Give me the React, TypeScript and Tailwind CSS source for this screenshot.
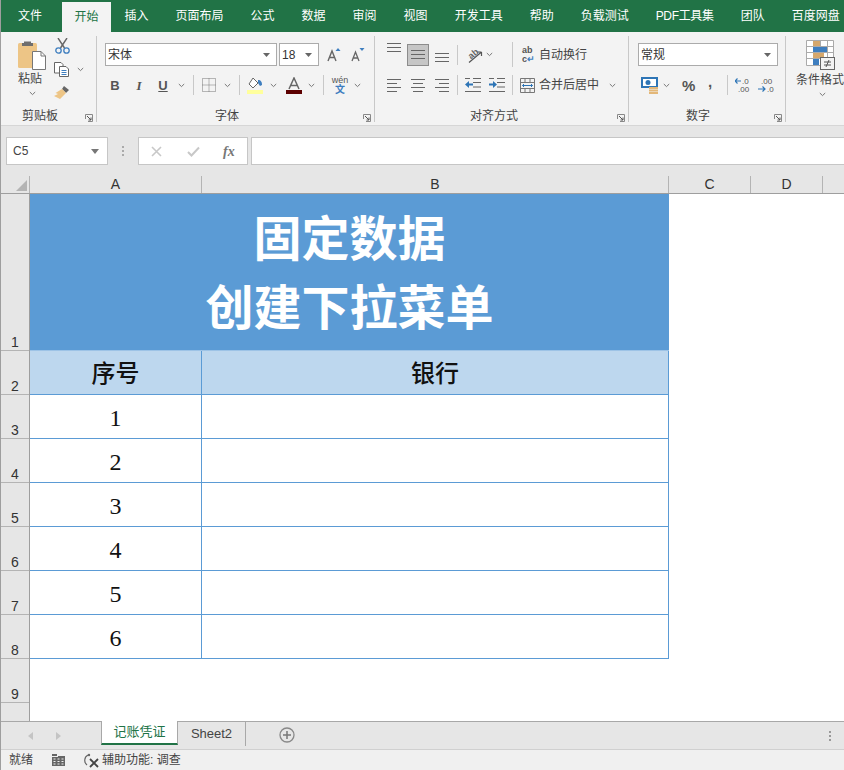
const cjk = { fontFamily: '"Liberation Sans","Noto Sans CJK SC",sans-serif' };
const latin = { fontFamily: '"Liberation Sans",sans-serif' };

const tabs = ['插入', '页面布局', '公式', '数据', '审阅', '视图', '开发工具', '帮助', '负载测试', 'PDF工具集', '团队', '百度网盘'];

function Chevron({ className = '' }: { className?: string }) {
  return (
    <svg width="7" height="5" viewBox="0 0 7 5" className={`shrink-0 ${className}`}>
      <path d="M.8 1 3.5 3.6 6.2 1" fill="none" stroke="#777" strokeWidth="1" />
    </svg>
  );
}

function Launcher() {
  return (
    <svg width="8" height="8" viewBox="0 0 8 8" className="shrink-0">
      <path d="M.5 5V.5H7.5V7.5H3" fill="none" stroke="#888" />
      <path d="M2 2 6 6M6 3.500V6H3.500" fill="none" stroke="#555" />
    </svg>
  );
}

function Lines({ kind, y = 0 }: { kind: 'l' | 'c' | 'r' | 'f'; y?: number }) {
  const d = {
    l: 'M0 1.5H14M0 5.5H10M0 9.5H14M0 13.5H10',
    c: 'M0 1.5H14M2 5.5H12M0 9.5H14M2 13.5H12',
    r: 'M0 1.5H14M4 5.5H14M0 9.5H14M4 13.5H14',
    f: 'M0 1.5H14M0 5.5H14M0 9.5H14',
  }[kind];
  return (
    <svg width="14" height="15" viewBox="0 0 14 15" style={{ marginTop: y }}>
      <path d={d} stroke="#666" fill="none" />
    </svg>
  );
}

function Combo({ label, className }: { label: string; className: string }) {
  return (
    <div className={`h-[23px] bg-white border border-[#ababab] flex items-center justify-between pl-[2px] pr-[6px] text-[12px] text-[#333] ${className}`}>
      <span>{label}</span>
      <svg width="7" height="4" viewBox="0 0 7 4"><path d="M0 0H7L3.500 4Z" fill="#666" /></svg>
    </div>
  );
}

function GroupLabel({ label, className }: { label: string; className: string }) {
  return (
    <div className={`absolute bottom-[-2px] h-[16px] flex items-center ${className}`}>
      <span className="text-[12px] leading-[16px] text-[#444]">{label}</span>
    </div>
  );
}

function Ribbon() {
  return (
    <div className="h-[94px] bg-[#f3f3f3] flex border-b border-[#d6d6d6] text-[#444] overflow-hidden">
      {/* 剪贴板 */}
      <div className="relative w-[96px] shrink-0 border-r border-[#c8c8c8] my-[4px] h-[86px] flex pl-[17px] pt-[4px]">
        <div className="w-[36px] flex flex-col">
          <svg width="28" height="30" viewBox="0 0 28 30">
            <rect x="0" y="3" width="19" height="25" rx="1.500" fill="#edc586" />
            <path d="M6 3V1.500H13V3H15V6H4V3Z" fill="#6e6e6e" />
            <path d="M14.500 11.500H23L27.500 16V29.500H14.500Z" fill="#fff" stroke="#777" />
            <path d="M23 11.500V16H27.500" fill="none" stroke="#777" />
          </svg>
          <span className="text-[12px] leading-[16px] mt-[1px] w-[24px] whitespace-nowrap">粘贴</span>
          <Chevron className="ml-[11px] mt-[4px]" />
        </div>
        <div className="flex flex-col -mt-[2px]">
          <svg width="15" height="16" viewBox="0 0 15 16" className="ml-[1px]">
            <path d="M3 0 9.500 10M12 0 5.500 10" stroke="#666" strokeWidth="1.400" fill="none" />
            <circle cx="3.500" cy="12.500" r="2.700" fill="none" stroke="#3e7ebf" strokeWidth="1.300" />
            <circle cx="11.500" cy="12.500" r="2.700" fill="none" stroke="#3e7ebf" strokeWidth="1.300" />
          </svg>
          <div className="flex items-center mt-[8px]">
            <svg width="15" height="15" viewBox="0 0 15 15">
              <path d="M.5.500H7L9 2.500V11H.5Z" fill="#fff" stroke="#666" />
              <path d="M5.500 4.500H12L14.500 7V14.500H5.500Z" fill="#fff" stroke="#666" />
              <path d="M7.500 8.500H12.500M7.500 10.500H12.500M7.500 12.500H12.500" stroke="#3e7ebf" />
            </svg>
            <Chevron className="ml-[8px]" />
          </div>
          <svg width="16" height="15" viewBox="0 0 16 15" className="mt-[8px]">
            <path d="M10 1 15 5 12 8 8 4Z" fill="#666" />
            <path d="M8 4 12 8 6 14 0 11 4 9 1.500 8 5.500 5.500Z" fill="#edc586" />
          </svg>
        </div>
        <GroupLabel label="剪贴板" className="left-[21px]" />
        <div className="absolute right-[3px] bottom-0"><Launcher /></div>
      </div>

      {/* 字体 */}
      <div className="relative w-[278px] shrink-0 border-r border-[#c8c8c8] my-[4px] h-[86px] pl-[8px] pt-[7px]">
        <div className="flex items-center h-[23px]">
          <Combo label="宋体" className="w-[172px]" />
          <Combo label="18" className="w-[40px] ml-[2px]" />
          <svg width="14" height="14" viewBox="0 0 14 14" className="ml-[8px]">
            <path d="M1 13 5 3 9 13M2.500 9.500H7.500" fill="none" stroke="#666" strokeWidth="1.400" />
            <path d="M8.500 3 11 0 13.500 3Z" fill="#3e7ebf" />
          </svg>
          <svg width="14" height="14" viewBox="0 0 14 14" className="ml-[10px]">
            <path d="M1 13 4.500 4 8 13M2.300 10H6.700" fill="none" stroke="#666" strokeWidth="1.300" />
            <path d="M8.500 0H13.500L11 3Z" fill="#3e7ebf" />
          </svg>
        </div>
        <div className="flex items-center h-[24px] mt-[7px] text-[#555]">
          <span className="w-[10px] ml-[5px] text-center font-bold text-[13px] leading-none" style={latin}>B</span>
          <span className="w-[10px] ml-[14px] text-center italic font-bold text-[13px] leading-none" style={{ fontFamily: '"Liberation Serif",serif' }}>I</span>
          <span className="w-[10px] ml-[14px] text-center underline font-bold text-[13px] leading-none" style={latin}>U</span>
          <Chevron className="ml-[10px]" />
          <div className="w-px h-[20px] bg-[#c8c8c8] ml-[8px]" />
          <svg width="14" height="14" viewBox="0 0 14 14" className="ml-[8px]">
            <path d="M.5.500H13.500V13.500H.5ZM7 .5V13.500M.5 7H13.500" fill="none" stroke="#777" strokeDasharray="1 1" />
          </svg>
          <Chevron className="ml-[8px]" />
          <div className="w-px h-[20px] bg-[#c8c8c8] ml-[8px]" />
          <svg width="17" height="17" viewBox="0 0 17 17" className="ml-[7px]">
            <path d="M6 1 11 6 6 11 2 7Z" fill="#fff" stroke="#666" />
            <path d="M11 3C14 3 15 5 15 8L13 9 11 6Z" fill="#3e7ebf" />
            <rect x="0" y="13" width="16" height="4" fill="#ffff9c" />
          </svg>
          <Chevron className="ml-[6px]" />
          <svg width="16" height="17" viewBox="0 0 16 17" className="ml-[9px]">
            <path d="M3 12 8 1 13 12M4.700 8.500H11.300" fill="none" stroke="#666" strokeWidth="1.500" />
            <rect x="0" y="13" width="16" height="4" fill="#5c0000" />
          </svg>
          <Chevron className="ml-[6px]" />
          <div className="w-px h-[20px] bg-[#c8c8c8] ml-[8px]" />
          <div className="ml-[8px] w-[16px] flex flex-col items-center leading-none">
            <span className="text-[9px] leading-[9px] text-[#555]" style={latin}>wén</span>
            <span className="text-[10px] leading-[10px] text-[#3e7ebf] font-bold">文</span>
          </div>
          <Chevron className="ml-[6px]" />
        </div>
        <GroupLabel label="字体" className="left-[118px]" />
        <div className="absolute right-[3px] bottom-0"><Launcher /></div>
      </div>

      {/* 对齐方式 */}
      <div className="relative w-[254px] shrink-0 border-r border-[#c8c8c8] my-[4px] h-[86px] pl-[12px] pt-[7px]">
        <div className="flex items-center h-[23px]">
          <div className="w-[14px] h-[23px]"><Lines kind="f" y={-1} /></div>
          <div className="ml-[6px] w-[22px] h-[22px] bg-[#c6c6c6] border border-[#8c8c8c] flex items-center justify-center">
            <svg width="14" height="11" viewBox="0 0 14 11"><path d="M0 1.500H14M0 5.500H14M0 9.500H14" stroke="#666" /></svg>
          </div>
          <div className="ml-[6px] w-[14px] h-[23px] pt-[9px]"><Lines kind="f" /></div>
          <div className="w-px h-[20px] bg-[#c8c8c8] ml-[8px]" />
          <svg width="18" height="18" viewBox="0 0 18 18" className="ml-[7px]">
            <text x="3" y="11" fontSize="9" fontWeight="700" fill="#666" fontFamily="Liberation Sans" transform="rotate(-40 8 8)">ab</text>
            <path d="M4 16.500 16.500 6M16.500 6H12.500M16.500 6V10" fill="none" stroke="#555" strokeWidth="1.200" />
          </svg>
          <Chevron className="ml-[3px]" />
          <div className="w-px h-[25px] bg-[#c8c8c8] ml-[19px]" />
          <div className="ml-[9px] w-[14px] flex flex-col text-[#555] text-[9px] leading-[9px] font-bold" style={latin}>
            <span>ab</span>
            <span>c<span className="text-[#3e7ebf]">↵</span></span>
          </div>
          <span className="ml-[3px] text-[12px] whitespace-nowrap">自动换行</span>
        </div>
        <div className="flex items-center h-[24px] mt-[7px]">
          <Lines kind="l" />
          <div className="ml-[10px]"><Lines kind="c" /></div>
          <div className="ml-[10px]"><Lines kind="r" /></div>
          <div className="w-px h-[20px] bg-[#c8c8c8] ml-[8px]" />
          <svg width="16" height="14" viewBox="0 0 16 14" className="ml-[7px]">
            <path d="M8 .5H16M8 4.500H16M8 9H16M0 13.500H16M0 .5H5" stroke="#666" fill="none" />
            <path d="M0 6.500 4 3V10ZM4 5.500H8V7.500H4Z" fill="#2e75b6" />
          </svg>
          <svg width="16" height="14" viewBox="0 0 16 14" className="ml-[8px]">
            <path d="M8 .5H16M8 4.500H16M8 9H16M0 13.500H16M0 .5H5" stroke="#666" fill="none" />
            <path d="M8 6.500 4 3V10ZM0 5.500H4V7.500H0Z" fill="#2e75b6" />
          </svg>
          <div className="w-px h-[20px] bg-[#c8c8c8] ml-[7px]" />
          <svg width="15" height="15" viewBox="0 0 15 15" className="ml-[7px]">
            <path d="M.5.500H14.500V14.500H.5ZM.5 4.500H14.500M.5 10.500H14.500M5 .5V4.500M10 .5V4.500M5 10.500V14.500M10 10.500V14.500" fill="none" stroke="#777" />
            <path d="M2.500 7.500H12.500M4 6 2.500 7.500 4 9M11 6 12.500 7.500 11 9" fill="none" stroke="#2e75b6" />
          </svg>
          <span className="ml-[4px] text-[12px] whitespace-nowrap">合并后居中</span>
          <Chevron className="ml-[10px]" />
        </div>
        <GroupLabel label="对齐方式" className="left-[95px]" />
        <div className="absolute right-[3px] bottom-0"><Launcher /></div>
      </div>

      {/* 数字 */}
      <div className="relative w-[157px] shrink-0 border-r border-[#c8c8c8] my-[4px] h-[86px] pl-[9px] pt-[7px]">
        <Combo label="常规" className="w-[140px]" />
        <div className="flex items-center h-[24px] mt-[7px]">
          <svg width="18" height="17" viewBox="0 0 18 17" className="ml-[3px] shrink-0">
            <rect x="1" y="1" width="15" height="9" fill="#fff" stroke="#2e75b6" strokeWidth="2" />
            <circle cx="7" cy="5.500" r="2.500" fill="#2e75b6" />
            <path d="M8 11H17M8 13.500H17M8 16H17" stroke="#e3b778" strokeWidth="1.800" />
          </svg>
          <Chevron className="ml-[4px]" />
          <span className="ml-[12px] w-[14px] text-[15px] leading-none font-bold text-[#555]" style={latin}>%</span>
          <span className="ml-[12px] w-[6px] -mt-[7px] text-[15px] leading-none font-bold text-[#555]" style={latin}>,</span>
          <div className="w-px h-[20px] bg-[#c8c8c8] ml-[13px]" />
          <svg width="16" height="16" viewBox="0 0 16 16" className="ml-[7px] shrink-0">
            <text x="7" y="7" fontSize="8" fill="#555" fontFamily="Liberation Sans">.0</text>
            <text x="3" y="15" fontSize="8" fill="#555" fontFamily="Liberation Sans">.00</text>
            <path d="M0 4H6M2.500 1.500 0 4 2.500 6.500" fill="none" stroke="#2e75b6" strokeWidth="1.200" />
          </svg>
          <svg width="16" height="16" viewBox="0 0 16 16" className="ml-[7px] shrink-0">
            <text x="3" y="7" fontSize="8" fill="#555" fontFamily="Liberation Sans">.00</text>
            <text x="9" y="15" fontSize="8" fill="#555" fontFamily="Liberation Sans">.0</text>
            <path d="M0 12H7M4.500 9.500 7 12 4.500 14.500" fill="none" stroke="#2e75b6" strokeWidth="1.200" />
          </svg>
        </div>
        <GroupLabel label="数字" className="left-[57px]" />
        <div className="absolute right-[3px] bottom-0"><Launcher /></div>
      </div>

      {/* 样式 */}
      <div className="flex-1 pl-[10px] pt-[8px] flex flex-col whitespace-nowrap">
        <svg width="29" height="30" viewBox="0 0 29 30" className="ml-[10px] shrink-0">
          <path d="M.5.500H27.500V25.500H.5ZM.5 6.500H27.500M.5 12.500H27.500M.5 18.500H27.500M7.500.5V25.500M14.500.5V25.500M21.500.5V25.500" fill="#fff" stroke="#aaa" />
          <rect x="7" y="1" width="7" height="5" fill="#d5a76c" />
          <rect x="7" y="7" width="14" height="5" fill="#3e7ebf" />
          <rect x="7" y="13" width="11" height="5" fill="#d5a76c" />
          <rect x="7" y="19" width="6" height="6" fill="#3e7ebf" />
          <rect x="14.500" y="17.500" width="14" height="12" fill="#f3f3f3" stroke="#666" />
          <path d="M18 22H25M18 25H25M23 20 20 27" stroke="#555" fill="none" />
        </svg>
        <span className="text-[12px] leading-[16px] mt-[2px]">条件格式</span>
        <Chevron className="ml-[23px] mt-[4px]" />
      </div>
    </div>
  );
}

function FormulaBar() {
  return (
    <div className="h-[50px] pt-[11px] pl-[5px] flex items-start">
      <div className="w-[102px] h-[28px] bg-white border border-[#c6c6c6] flex items-center justify-between pl-[6px] pr-[8px] text-[12px] text-[#444]">
        <span style={latin}>C5</span>
        <svg width="8" height="5" viewBox="0 0 8 5"><path d="M0 0H8L4 5Z" fill="#777" /></svg>
      </div>
      <div className="w-[30px] h-[28px] flex flex-col items-center justify-center gap-[2px]">
        <div className="w-[2px] h-[2px] bg-[#aaa]" />
        <div className="w-[2px] h-[2px] bg-[#aaa]" />
        <div className="w-[2px] h-[2px] bg-[#aaa]" />
      </div>
      <div className="w-[110px] h-[28px] bg-white border border-[#c6c6c6] flex items-center pl-[12px]">
        <svg width="11" height="11" viewBox="0 0 11 11"><path d="M1 1 10 10M10 1 1 10" stroke="#c8c8c8" strokeWidth="1.600" /></svg>
        <svg width="13" height="11" viewBox="0 0 13 11" className="ml-[25px]"><path d="M1 6 4.500 9.500 12 1.500" fill="none" stroke="#c8c8c8" strokeWidth="2" /></svg>
        <span className="ml-[23px] italic font-bold text-[14px] text-[#777]" style={{ fontFamily: '"Liberation Serif",serif' }}>fx</span>
      </div>
      <div className="ml-[3px] flex-1 h-[28px] bg-white border border-[#c6c6c6] border-r-0" />
    </div>
  );
}

const head = 'h-full bg-[#e6e6e6] flex items-center justify-center border-l border-[#b4b4b4] text-[14px] text-[#333]';

function ColumnHeaders() {
  return (
    <div className="h-[18px] flex border-b border-[#9e9e9e]" style={latin}>
      <div className="w-[28px] h-full flex items-end justify-end pr-[2px] pb-[2px]">
        <svg width="11" height="11" viewBox="0 0 12 12"><path d="M12 0V12H0Z" fill="#b4b4b4" /></svg>
      </div>
      <div className={`w-[172px] ${head}`}>A</div>
      <div className={`w-[467px] ${head}`}>B</div>
      <div className={`w-[82px] ${head}`}>C</div>
      <div className={`w-[72px] ${head}`}>D</div>
      <div className="flex-1 border-l border-[#b4b4b4]" />
    </div>
  );
}

const rowHeads = [
  { n: '1', h: 'h-[157px]' },
  { n: '2', h: 'h-[44px]' },
  { n: '3', h: 'h-[44px]' },
  { n: '4', h: 'h-[44px]' },
  { n: '5', h: 'h-[44px]' },
  { n: '6', h: 'h-[44px]' },
  { n: '7', h: 'h-[44px]' },
  { n: '8', h: 'h-[44px]' },
  { n: '9', h: 'h-[44px]' },
];

function Sheet() {
  return (
    <div className="h-[527px] flex bg-white overflow-hidden">
      <div className="w-[29px] shrink-0 bg-[#e6e6e6] border-r border-[#9e9e9e] flex flex-col" style={latin}>
        {rowHeads.map((r) => (
          <div key={r.n} className={`${r.h} shrink-0 border-b border-[#b4b4b4] flex items-end justify-center text-[14px] leading-[16px] text-[#333]`}>
            {r.n}
          </div>
        ))}
      </div>
      <div className="w-[639px] shrink-0 self-start">
        <div className="h-[157px] bg-[#5b9bd5] flex flex-col items-center justify-center pb-[5px] text-white font-bold text-[48px] leading-[69px] border-b border-[#9dc3e6]" style={{ fontFamily: '"Noto Sans CJK SC",sans-serif' }}>
          <span>固定数据</span>
          <span>创建下拉菜单</span>
        </div>
        <div className="grid grid-cols-[172px_467px] text-[24px] text-[#111]" style={{ fontFamily: '"Liberation Serif","Noto Sans CJK SC",serif' }}>
          <div className="h-[44px] pt-[3px] font-medium bg-[#bdd7ee] border-r border-b border-[#5b9bd5] flex items-center justify-center">序号</div>
          <div className="h-[44px] pt-[3px] font-medium bg-[#bdd7ee] border-r border-b border-[#5b9bd5] flex items-center justify-center">银行</div>
          {['1', '2', '3', '4', '5', '6'].flatMap((n) => [
            <div key={n} className="h-[44px] pt-[3px] border-r border-b border-[#5b9bd5] flex items-center justify-center">{n}</div>,
            <div key={n + 'b'} className="h-[44px] border-r border-b border-[#5b9bd5]" />,
          ])}
        </div>
      </div>
    </div>
  );
}

function SheetTabs() {
  return (
    <div className="h-[28px] bg-[#e6e6e6] border-t border-[#a8a8a8] flex text-[13px]">
      <div className="w-[100px] shrink-0 flex items-center pl-[27px]">
        <svg width="5" height="8" viewBox="0 0 5 8"><path d="M5 0V8L0 4Z" fill="#c4c4c4" /></svg>
        <svg width="5" height="8" viewBox="0 0 5 8" className="ml-[23px]"><path d="M0 0V8L5 4Z" fill="#c4c4c4" /></svg>
      </div>
      <div className="w-[77px] h-[24px] bg-white border-l border-r border-[#a8a8a8] border-b-[2px] border-b-[#217346] -mt-px flex items-center justify-center text-[#217346]">记账凭证</div>
      <div className="w-[68px] h-[24px] border-r border-[#a8a8a8] flex items-center justify-center text-[#444]">Sheet2</div>
      <svg width="16" height="16" viewBox="0 0 16 16" className="ml-[33px] mt-[5px]">
        <circle cx="8" cy="8" r="7" fill="none" stroke="#888" strokeWidth="1.300" />
        <path d="M4 8H12M8 4V12" stroke="#777" strokeWidth="1.500" />
      </svg>
      <div className="ml-auto mr-[13px] h-full flex flex-col items-center justify-center gap-[2px]">
        <div className="w-[2px] h-[2px] bg-[#999]" />
        <div className="w-[2px] h-[2px] bg-[#999]" />
        <div className="w-[2px] h-[2px] bg-[#999]" />
      </div>
    </div>
  );
}

function StatusBar() {
  return (
    <div className="h-[21px] bg-[#f0f0f0] border-t border-[#d0d0d0] flex items-center pl-[8px] text-[12px] text-[#444]">
      <span>就绪</span>
      <svg width="13" height="12" viewBox="0 0 13 12" className="ml-[19px]">
        <path d="M0 0H5V2H0ZM6 2H13V12H0V3H6Z" fill="#666" />
        <path d="M1.500 5H3.500M5.500 5H7.500M9.500 5H11.500M1.500 7.500H3.500M5.500 7.500H7.500M9.500 7.500H11.500M1.500 10H3.500M5.500 10H7.500M9.500 10H11.500" stroke="#f0f0f0" />
      </svg>
      <svg width="16" height="15" viewBox="0 0 16 15" className="ml-[18px]">
        <path d="M5 2A6 6 0 0 0 4 12" fill="none" stroke="#666" strokeWidth="1.200" />
        <circle cx="6" cy="2" r="1.200" fill="#666" />
        <path d="M7 6 15 14M15 6 7 14" stroke="#444" strokeWidth="1.800" />
      </svg>
      <span className="ml-[3px]">辅助功能: 调查</span>
    </div>
  );
}

export default function App() {
  return (
    <div className="w-[844px] h-[770px] overflow-hidden bg-[#e6e6e6] flex flex-col border-l border-[#9e9e9e] select-none" style={cjk}>
      <div className="h-[32px] shrink-0 bg-[#217346] flex text-[12px] text-white whitespace-nowrap pl-[4px]">
        <div className="px-[13px] flex items-center">文件</div>
        <div className="ml-[7px] mt-[2px] px-[12.500px] bg-[#f3f3f3] text-[#217346] flex items-center">开始</div>
        {tabs.map((t) => (
          <div key={t} className={`px-[13.500px] flex items-center ${t === 'PDF工具集' ? 'tracking-[-0.33px]' : ''}`}>{t}</div>
        ))}
      </div>
      <Ribbon />
      <FormulaBar />
      <ColumnHeaders />
      <Sheet />
      <SheetTabs />
      <StatusBar />
    </div>
  );
}
